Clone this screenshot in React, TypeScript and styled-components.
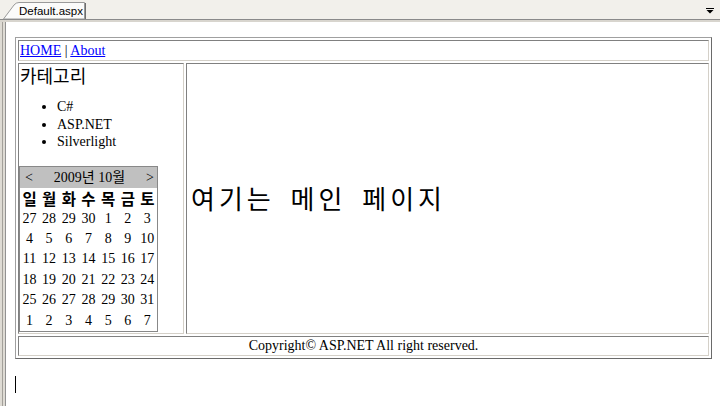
import React from "react";
import styled, { createGlobalStyle } from "styled-components";

const GlobalStyle = createGlobalStyle`
  html, body { margin: 0; padding: 0; background: #fff; }
  body { width: 720px; height: 406px; overflow: hidden; }
`;

const Window = styled.div`
  width: 720px;
  height: 406px;
  display: flex;
  flex-direction: column;
  overflow: hidden;
  background: #fff;
  font-family: "Liberation Serif", "Noto Sans CJK KR", serif;
  font-size: 14px;
  color: #000;
`;

const TabStrip = styled.div`
  flex: none;
  height: 19px;
  display: flex;
  align-items: flex-end;
  justify-content: space-between;
  padding-left: 3px;
  background: #f2f0eb;
  border-bottom: 1px solid #8a8a8a;
`;

const Tab = styled.div`
  position: relative;
  box-sizing: border-box;
  width: 83px;
  height: 17px;
  display: flex;
  align-items: center;
  padding-left: 16px;
  font-family: "Liberation Sans", Arial, sans-serif;
  font-size: 11.5px;
  color: #000;
`;

const TabShape = styled.svg`
  position: absolute;
  left: 0;
  top: 0;
`;

const TabLabel = styled.span`
  position: relative;
  line-height: 13px;
  padding-top: 1px;
`;

const MenuArrow = styled.svg`
  align-self: center;
  margin: 2px 6px 0 0;
`;

const Workspace = styled.div`
  flex: 1;
  display: flex;
  border-top: 2px solid #d8d5ce;
  min-height: 0;
`;

const Gutter = styled.div`
  flex: none;
  width: 6px;
  background: linear-gradient(
    to right,
    #dedbd4 0 2px,
    #a3a09a 2px 3px,
    #dedbd4 3px 5px,
    #929292 5px 6px
  );
`;

const Page = styled.div`
  flex: 1;
  padding: 15px 10px 15px 9px;
  min-width: 0;
`;

const LayoutTable = styled.table`
  width: 697px;
  border-collapse: separate;
  border-spacing: 2px;
  border: 1px solid;
  border-color: #a0a0a0 #6a6a6a #6a6a6a #a0a0a0;
`;

const Cell = styled.td<{ $valign?: string; $align?: string; $width?: number; $pad?: string }>`
  box-sizing: border-box;
  padding: ${(p) => p.$pad || "1px"};
  border: 1px solid;
  border-color: #808080 #d4d0c8 #d4d0c8 #808080;
  vertical-align: ${(p) => p.$valign || "middle"};
  text-align: ${(p) => p.$align || "left"};
  ${(p) => (p.$width ? `width: ${p.$width}px;` : "")}
  line-height: 17px;
`;

const NavLink = styled.a`
  color: #0000ff;
  text-decoration: underline;
`;

const Heading = styled.div`
  font-family: "Noto Sans CJK KR", sans-serif;
  font-size: 18px;
  line-height: 20px;
  padding-left: 1px;
`;

const CategoryList = styled.ul`
  margin: 13px 0 15px;
  padding-left: 38px;
  list-style: disc;
`;

const CategoryItem = styled.li`
  line-height: 17.5px;
`;

const Calendar = styled.table`
  width: 139px;
  border-collapse: collapse;
  table-layout: fixed;
  border: 1px solid #888;
  color: #000;
`;

const CalTitle = styled.td`
  background: #c0c0c0;
  height: 21px;
  padding: 0 3px 0 5px;
`;

const TitleBar = styled.div`
  display: flex;
  justify-content: space-between;
  align-items: center;
  line-height: 21px;
`;

const TitleText = styled.span`
  font-size: 14px;
`;

const DayHead = styled.th`
  padding: 0;
  height: 21px;
  text-align: center;
  font-family: "Noto Sans CJK KR", sans-serif;
  font-weight: 700;
  font-size: 15.5px;
  line-height: 20px;
`;

const DayCell = styled.td`
  padding: 0;
  height: 20.4px;
  text-align: center;
  line-height: 20px;
`;

const MainText = styled.span`
  font-family: "Noto Sans CJK KR", sans-serif;
  font-size: 26px;
  letter-spacing: 4px;
  word-spacing: 6px;
  line-height: 30px;
  margin-left: 3px;
`;

const Footer = styled(Cell)`
  line-height: 16px;
`;

const Caret = styled.div`
  width: 1px;
  height: 17px;
  background: #000;
  margin: 17px 0 0 0;
`;

const weeks = [
  [27, 28, 29, 30, 1, 2, 3],
  [4, 5, 6, 7, 8, 9, 10],
  [11, 12, 13, 14, 15, 16, 17],
  [18, 19, 20, 21, 22, 23, 24],
  [25, 26, 27, 28, 29, 30, 31],
  [1, 2, 3, 4, 5, 6, 7],
];
const dayNames = ["일", "월", "화", "수", "목", "금", "토"];

export default function App() {
  return (
    <>
      <GlobalStyle />
      <Window>
        <TabStrip>
          <Tab>
            <TabShape width="83" height="17" viewBox="0 0 83 17">
              <path
                d="M0.5 17 L11 3 Q13 0.5 16 0.5 L81.5 0.5 L81.5 17 Z"
                fill="#fbfbfa"
                stroke="#9a9a9a"
              />
              <line x1="82.5" y1="1" x2="82.5" y2="17" stroke="#6e6e6e" />
            </TabShape>
            <TabLabel>Default.aspx</TabLabel>
          </Tab>
          <MenuArrow width="8" height="6" viewBox="0 0 8 6">
            <rect x="0" y="0" width="8" height="1" fill="#000" />
            <path d="M0.5 2 L7.5 2 L4 5.5 Z" fill="#000" />
          </MenuArrow>
        </TabStrip>
        <Workspace>
          <Gutter />
          <Page>
            <LayoutTable>
              <tbody>
                <tr>
                  <Cell colSpan={2}>
                    <NavLink href="#">HOME</NavLink> | <NavLink href="#">About</NavLink>
                  </Cell>
                </tr>
                <tr>
                  <Cell $valign="top" $width={166} $pad="1px 0">
                    <Heading>카테고리</Heading>
                    <CategoryList>
                      <CategoryItem>C#</CategoryItem>
                      <CategoryItem>ASP.NET</CategoryItem>
                      <CategoryItem>Silverlight</CategoryItem>
                    </CategoryList>
                    <Calendar>
                      <tbody>
                        <tr>
                          <CalTitle colSpan={7}>
                            <TitleBar>
                              <TitleText>&lt;</TitleText>
                              <TitleText>2009년 10월</TitleText>
                              <TitleText>&gt;</TitleText>
                            </TitleBar>
                          </CalTitle>
                        </tr>
                        <tr>
                          {dayNames.map((d) => (
                            <DayHead key={d}>{d}</DayHead>
                          ))}
                        </tr>
                        {weeks.map((w, i) => (
                          <tr key={i}>
                            {w.map((d, j) => (
                              <DayCell key={j}>{d}</DayCell>
                            ))}
                          </tr>
                        ))}
                      </tbody>
                    </Calendar>
                  </Cell>
                  <Cell>
                    <MainText>여기는 메인 페이지</MainText>
                  </Cell>
                </tr>
                <tr>
                  <Footer colSpan={2} $align="center">
                    Copyright© ASP.NET All right reserved.
                  </Footer>
                </tr>
              </tbody>
            </LayoutTable>
            <Caret />
          </Page>
        </Workspace>
      </Window>
    </>
  );
}
